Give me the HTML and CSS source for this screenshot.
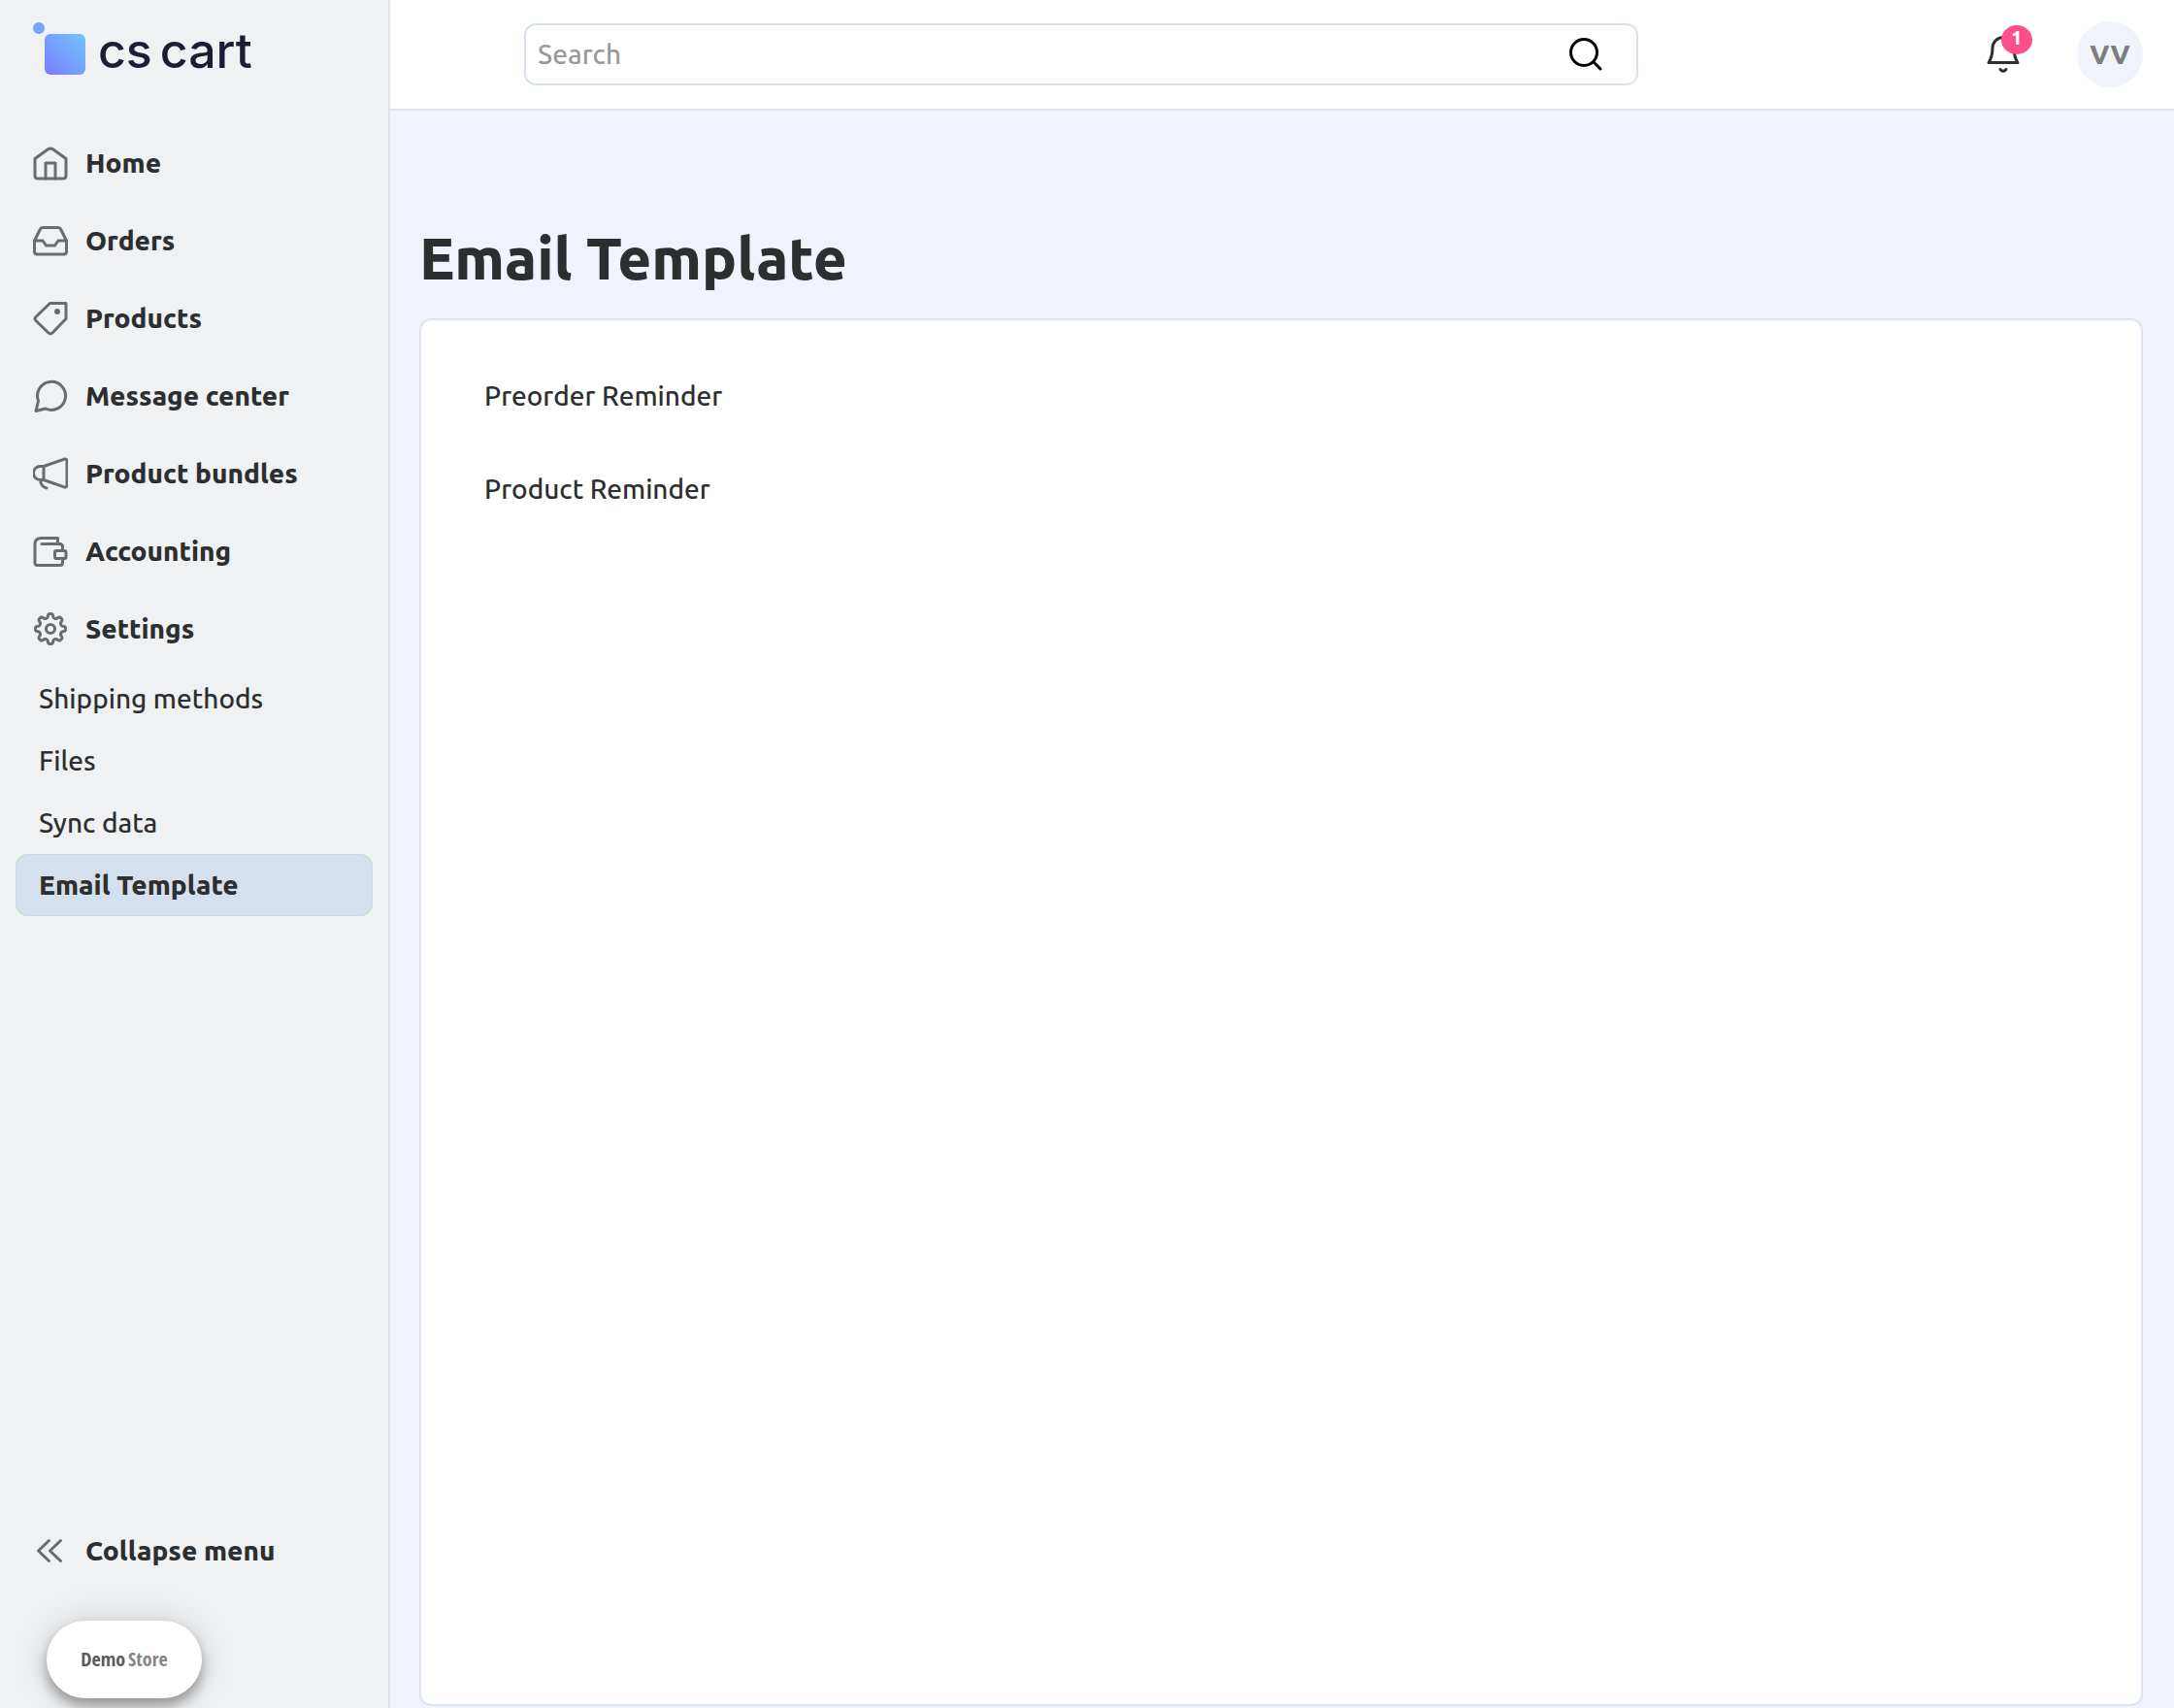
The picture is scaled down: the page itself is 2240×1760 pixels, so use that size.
FILE: index.html
```html
<!DOCTYPE html>
<html lang="en">
<head>
	<meta charset="utf-8">
	<title>Email Template</title>
	<link rel="stylesheet" href="styles.css">
</head>

<body>

	<aside class="sidebar">
		<a href="#" class="logo">
			<svg class="logo-mark" width="56" height="56" viewBox="0 0 56 56">
				<defs>
					<linearGradient id="logoFill" x1="0" y1="1" x2="1" y2="0">
						<stop offset="0" stop-color="#7a7dff"/>
						<stop offset="1" stop-color="#72c4ff"/>
					</linearGradient>
				</defs>
				<circle cx="7" cy="7" r="6" fill="#75a3ff"/>
				<rect x="13" y="13" width="42" height="42" rx="6" fill="url(#logoFill)"/>
			</svg>
			<span class="logo-text"><span>cs</span> <span>cart</span></span>
		</a>

		<nav>
			<ul class="menu">
				<li><a href="#">
					<svg class="icon" viewBox="0 0 36 36"><path d="M2 13.500L15.500 3.800q2.500-1.700 5 0L34 13.500V31q0 3-3 3H5q-3 0-3-3z"/><path d="M13 34V18h10v16"/></svg>
					Home</a></li>
				<li><a href="#">
					<svg class="icon" viewBox="0 0 36 36"><path d="M1.500 18L7.500 6q1-1.500 3-1.500h15q2 0 3 1.500L34.500 18v11q0 3-3 3h-27q-3 0-3-3zM1.500 18H10l3.500 5h9l3.500-5h8.500"/></svg>
					Orders</a></li>
				<li><a href="#">
					<svg class="icon" viewBox="0 0 36 36"><path d="M17.500 2.500H34v16L20 33q-2 2-4 0L3 20.500q-2-2 0-4z"/><circle class="dot" cx="25" cy="11" r="1.500"/></svg>
					Products</a></li>
				<li><a href="#">
					<svg class="icon" viewBox="0 0 36 36"><path d="M5.500 23A14.500 14.500 0 1 1 13 31L3 33.500z"/></svg>
					Message center</a></li>
				<li><a href="#">
					<svg class="icon" viewBox="0 0 36 36"><path d="M11 10.500L31.500 3.300q3.500-1 3.500 2.200v24q0 3.200-3.500 2.200L11 24.500H7.500a7 7 0 0 1 0-14H11V24.500M7.500 24.500q.5 7 6.500 8.500"/></svg>
					Product bundles</a></li>
				<li><a href="#">
					<svg class="icon" viewBox="0 0 36 36"><path d="M9 10.500h18.500q3 0 3 3v4h2q1.500 0 1.500 1.500v5q0 1.500-1.500 1.500h-2v4q0 3-3 3h-23q-2.500 0-2.500-2.500V11q0-6.500 6.500-6.500h17v6M30.500 17.500H24q-1.500 0-1.500 1.500v5q0 1.500 1.500 1.500h6.500"/></svg>
					Accounting</a></li>
				<li><a href="#">
					<svg class="icon" viewBox="0 0 36 36"><path id="gear" d=""/><circle cx="18" cy="18" r="4.500"/></svg>
					Settings</a></li>
			</ul>
			<ul class="submenu">
				<li><a href="#">Shipping methods</a></li>
				<li><a href="#">Files</a></li>
				<li><a href="#">Sync data</a></li>
				<li><a href="#" class="active">Email Template</a></li>
			</ul>
		</nav>

		<div class="sidebar-bottom">
			<button type="button" class="collapse">
				<svg class="icon" viewBox="0 0 36 36"><path d="M16.500 7.500L5.500 18l11 10.500M28.500 7.500L17.500 18l11 10.500"/></svg>
				Collapse menu
			</button>
			<button type="button" class="demo"><span class="dark">Demo</span> <span>Store</span></button>
		</div>
	</aside>

	<div class="main">
		<header class="topbar">
			<form class="search">
				<input type="text" placeholder="Search" aria-label="Search">
				<button type="button" aria-label="Find">
					<svg width="36" height="36" viewBox="0 0 36 36"><circle cx="16" cy="16" r="13.500"/><path d="M26 26l7 7"/></svg>
				</button>
			</form>
			<div class="user">
				<button type="button" class="bell" aria-label="Notifications">
					<svg width="36" height="40" viewBox="0 0 36 40"><path d="M3 28.500h30q-4-6-4-15a11 11 0 0 0-22 0q0 9-4 15zM15 35.500q3 3.500 6 0"/></svg>
					<span class="badge">1</span>
				</button>
				<button type="button" class="avatar">VV</button>
			</div>
		</header>

		<main class="content">
			<h1>Email Template</h1>
			<div class="card">
				<a href="#">Preorder Reminder</a>
				<a href="#">Product Reminder</a>
			</div>
		</main>
	</div>

<script>
	// settings gear, eight soft teeth
	var d = "";
	for (var i = 0; i <= 180; i++) {
		var a = i * Math.PI / 90;
		var r = 13.6 + 2 * Math.tanh(2 * Math.cos(8 * a));
		d += (i ? "L" : "M") + (18 + r * Math.cos(a)).toFixed(2) + " " + (18 + r * Math.sin(a)).toFixed(2);
	}
	document.getElementById("gear").setAttribute("d", d + "z");
</script>

</body>
</html>
```
FILE: styles.css
```css
* {
    box-sizing: border-box;
}

body {
    margin: 0;
    display: flex;
    min-height: 100vh;
    font-family: Ubuntu, "Noto Sans", sans-serif;
    font-size: 28px;
    font-weight: 500;
    line-height: 40px;
    color: #2c2e2f;
    background: #f0f3fb;
}

a {
    color: inherit;
    text-decoration: none;
}

ul {
    list-style: none;
    margin: 0;
    padding: 0;
}

button {
    padding: 0;
    border: none;
    background: none;
    font: inherit;
    color: inherit;
    cursor: pointer;
}

svg {
    display: block;
    flex-shrink: 0;
    fill: none;
    stroke-linecap: round;
    stroke-linejoin: round;
}

/* sidebar */
.sidebar {
    display: flex;
    flex-direction: column;
    flex-shrink: 0;
    width: 402px;
    background: #eff1f3;
    border-right: 2px solid #e0e3e6;
}

.logo {
    display: flex;
    align-items: center;
    gap: 12px;
    height: 128px;
    padding: 0 33px 28px;
}

.logo-text {
    display: flex;
    gap: 8px;
    padding-top: 4px;
    font-family: Inter, "Liberation Sans", sans-serif;
    font-size: 50px;
    font-weight: 500;
    color: #1c1d33;
}

.menu a, .collapse {
    display: flex;
    align-items: center;
    gap: 18px;
    width: 100%;
    height: 80px;
    padding: 0 34px;
    font-weight: 800;
    text-align: left;
}

.icon {
    width: 36px;
    height: 36px;
    stroke: #696b6d;
    stroke-width: 3;
}

.icon .dot {
    fill: #696b6d;
}

.submenu {
    padding: 0 16px;
}

.submenu a {
    display: block;
    padding: 11px 23px;
    border: 1px solid transparent;
    border-radius: 12px;
}

.submenu .active {
    font-weight: 800;
    background: #d5e0ee;
    border-color: #cbd7e4;
}

.sidebar-bottom {
    margin-top: auto;
    padding-bottom: 10px;
}

.collapse {
    margin-bottom: 32px;
}

.demo {
    display: flex;
    align-items: center;
    justify-content: center;
    gap: 3px;
    width: 160px;
    height: 80px;
    margin-left: 48px;
    border-radius: 40px;
    background: #fff;
    box-shadow: 0 8px 14px rgba(0, 0, 0, .35), 0 0 40px rgba(0, 0, 0, .12);
    font-family: "Open Sans Condensed", "Roboto Condensed", "Liberation Sans Narrow", "Noto Sans", sans-serif;
    font-size: 20px;
    font-weight: 700;
    color: #858585;
}

.demo .dark {
    color: #5a5a5a;
}

/* header */
.main {
    display: flex;
    flex-direction: column;
    flex: 1;
    min-width: 0;
}

.topbar {
    display: flex;
    align-items: center;
    justify-content: space-between;
    height: 114px;
    padding: 0 32px 0 138px;
    background: #fff;
    border-bottom: 2px solid #e1e4e6;
}

.search {
    display: flex;
    align-items: center;
    width: 1148px;
    height: 64px;
    padding: 0 34px 0 12px;
    border: 2px solid #d8e3f0;
    border-radius: 12px;
}

.search input {
    flex: 1;
    min-width: 0;
    padding: 0;
    border: none;
    outline: none;
    background: none;
    font: inherit;
}

.search input::placeholder {
    color: #999;
}

.search svg {
    stroke: #000;
    stroke-width: 3;
}

.user {
    display: flex;
    align-items: center;
    gap: 58px;
}

.bell {
    position: relative;
}

.bell svg {
    stroke: #2c2e2f;
    stroke-width: 3;
}

.badge {
    position: absolute;
    top: -10px;
    right: -12px;
    width: 32px;
    height: 30px;
    border-radius: 50%;
    background: #fc4f8c;
    font-size: 20px;
    line-height: 26px;
    font-weight: 800;
    color: #fff;
}

.avatar {
    width: 68px;
    height: 68px;
    border-radius: 50%;
    background: #f0f3fa;
    font-weight: 800;
    color: #7b7d80;
}

/* page */
.content {
    display: flex;
    flex-direction: column;
    flex: 1;
    padding: 112px 32px 2px 30px;
}

h1 {
    margin: 0 0 22px;
    font-size: 60px;
    line-height: 80px;
    font-weight: 800;
}

.card {
    display: flex;
    flex-direction: column;
    align-items: flex-start;
    gap: 56px;
    flex: 1;
    padding: 58px 65px;
    border: 2px solid #dbe4ef;
    border-radius: 12px;
    background: #fff;
}
```
